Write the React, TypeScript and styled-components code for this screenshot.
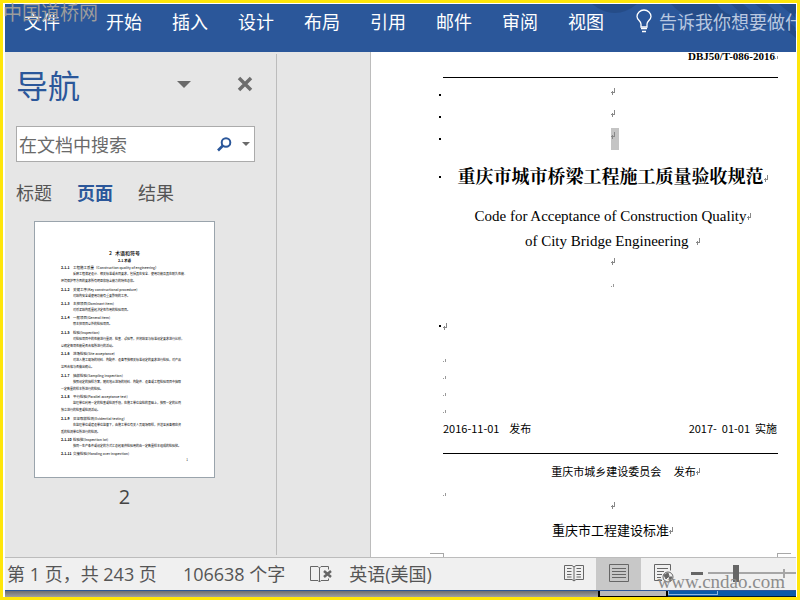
import React from "react";
import styled, { createGlobalStyle } from "styled-components";

const UI = `"Open Sans", "Noto Sans CJK SC", sans-serif`;
const SERIF = `"Liberation Serif", "Noto Serif CJK SC", "Noto Sans CJK SC", serif`;
const HEI = `"Noto Sans CJK SC", sans-serif`;

const Global = createGlobalStyle`
  *, *::before, *::after { box-sizing: border-box; }
  html, body { margin: 0; padding: 0; }
  button, input { font: inherit; color: inherit; border: 0; background: none; padding: 0; margin: 0; }
  p, h1, h2, h3, ul { margin: 0; padding: 0; font-weight: inherit; }
`;

const Frame = styled.div`
  position: relative;
  display: flex;
  flex-direction: column;
  height: 100vh;
  border: 3px solid #ffe60a;
  padding: 1px 1px 0 2px;
  background: #fff;
  font-family: ${UI};
  font-size: 18px;
  line-height: 24px;
  color: #444;
  overflow: hidden;
`;

/* Ribbon */
const Ribbon = styled.nav`
  position: relative;
  flex: none;
  display: flex;
  align-items: flex-start;
  height: 48px;
  padding: 5px 0 0 19px;
  background: #2b579a;
  color: #fff;
  overflow: hidden;
`;
const RibbonArt = styled.svg`
  position: absolute;
  top: 0;
  right: 0;
  width: 205px;
  height: 48px;
`;
const Tab = styled.button<{ $first?: boolean }>`
  position: relative;
  flex: none;
  margin-right: ${(p) => (p.$first ? 46 : 30)}px;
  font-family: ${HEI};
  line-height: 24px;
`;
const TellMe = styled.button`
  position: relative;
  flex: none;
  display: flex;
  align-items: center;
  gap: 7px;
  margin-left: 2px;
  color: #b9c8e0;
  font-family: ${HEI};
  white-space: nowrap;
`;

/* Body */
const Body = styled.div`
  flex: 1;
  min-height: 0;
  display: flex;
  background: #e6e6e6;
`;
const NavPane = styled.aside`
  flex: none;
  width: 272px;
  margin: 2px 0;
  padding: 8px 21px 0 11px;
  border-right: 1px solid #bcbcbc;
  font-family: ${HEI};
`;
const NavHead = styled.div`
  display: flex;
  align-items: center;
  height: 44px;
`;
const NavTitle = styled.h1`
  flex: 1;
  font-size: 32px;
  font-weight: 400;
  line-height: 44px;
  color: #2b579a;
`;
const IconButton = styled.button`
  display: flex;
  align-items: center;
  flex: none;
`;
const CloseButton = styled(IconButton)`
  margin: 0 2px 0 46px;
`;
const SearchBox = styled.form`
  display: flex;
  align-items: center;
  height: 36px;
  margin-top: 20px;
  padding: 0 4px 0 2px;
  gap: 10px;
  border: 1px solid #ababab;
  background: #fff;
`;
const SearchInput = styled.input`
  flex: 1;
  min-width: 0;
  outline: 0;
  &::placeholder { color: #6a6a6a; opacity: 1; }
`;
const NavTabs = styled.div`
  display: flex;
  gap: 25px;
  margin-top: 17px;
`;
const NavTab = styled.button<{ $active?: boolean }>`
  line-height: 26px;
  font-weight: ${(p) => (p.$active ? 700 : 400)};
  color: ${(p) => (p.$active ? "#2b579a" : "#555")};
`;
const Thumb = styled.figure`
  width: 181px;
  margin: 16px 0 0 18px;
  text-align: center;
`;
const ThumbPage = styled.div`
  height: 257px;
  padding: 27px 26px 0;
  border: 1px solid #9aa4ac;
  background: #fff;
  color: #000;
  font-size: 3px;
  line-height: 7px;
  text-align: left;
  white-space: nowrap;
`;
const ThumbTitle = styled.h2`
  font-size: 5px;
  font-weight: 500;
  line-height: 8px;
  text-align: center;
  white-space: pre;
`;
const ThumbSub = styled.h3`
  font-weight: 700;
  line-height: 7px;
  text-align: center;
`;
const Entry = styled.section<{ $spaced?: boolean }>`
  margin-bottom: ${(p) => (p.$spaced ? 1 : 0)}px;
`;
const Term = styled.h3`
  display: grid;
  grid-template-columns: 12px 1fr;
`;
const TermNo = styled.span`
  font-weight: 700;
`;
const Definition = styled.p`
  text-indent: 12px;
  white-space: pre-line;
`;
const ThumbFoot = styled.p`
  text-align: right;
`;
const ThumbCaption = styled.figcaption`
  margin-top: 6px;
  font-family: ${UI};
  font-size: 20px;
  line-height: 26px;
`;

/* Document */
const Canvas = styled.main`
  flex: 1;
  min-width: 0;
  display: flex;
  padding-left: 93px;
`;
const Sheet = styled.article`
  flex: 1;
  min-width: 0;
  display: flex;
  flex-direction: column;
  padding: 0 18px 0 67px;
  border-left: 1px solid #bcbcbc;
  background: #fff;
  color: #000;
  font-family: ${HEI};
  font-size: 11px;
  overflow: hidden;
`;
const DocHeader = styled.header`
  flex: none;
  height: 26px;
  margin-left: 5px;
  padding-right: 3px;
  border-bottom: 1px solid #000;
  font-family: ${SERIF};
  font-weight: 700;
  line-height: 6px;
  text-align: right;
`;
const Line = styled.div<{ $h: number; $align?: string; $indent?: number }>`
  flex: none;
  display: grid;
  grid-template-columns: 5px 1fr;
  align-items: center;
  height: ${(p) => p.$h}px;
  line-height: ${(p) => Math.min(p.$h, 24)}px;
  text-align: ${(p) => p.$align || "center"};
  padding-left: ${(p) => p.$indent || 0}px;
  white-space: pre;
`;
const Gap = styled.div<{ $h: number }>`
  flex: none;
  height: ${(p) => p.$h}px;
`;
const Bullet = styled.i<{ $on?: boolean }>`
  width: 2px;
  height: 2px;
  margin-left: 1px;
  background: ${(p) => (p.$on ? "#000" : "transparent")};
`;
const Text = styled.p<{ $kind?: "title" | "latin" | "large" }>`
  font-family: ${(p) => (p.$kind === "title" || p.$kind === "latin" ? SERIF : HEI)};
  font-size: ${(p) => ({ title: 18, latin: 15, large: 13 })[p.$kind as string] || 11}px;
  font-weight: ${(p) => (p.$kind === "title" ? 700 : 400)};
`;
const MarkSvg = styled.svg`
  width: 5px;
  height: 8px;
  margin-right: -5px;
`;
const EmptyLine = styled.span<{ $selected?: boolean }>`
  display: inline-flex;
  justify-content: flex-start;
  width: 8px;
  height: 22px;
  margin-right: -8px;
  padding-top: 4px;
  background: ${(p) => (p.$selected ? "#c4c4c4" : "transparent")};
  vertical-align: top;
`;
const DateRow = styled.div`
  flex: none;
  display: flex;
  justify-content: space-between;
  height: 36px;
  margin-left: 5px;
  padding-right: 1px;
  border-bottom: 1px solid #000;
  line-height: 21px;
  white-space: pre;
`;
const Corners = styled.div`
  flex: none;
  display: flex;
  justify-content: space-between;
  height: 4px;
  margin: auto -13px 0 -8px;
`;
const Corner = styled.i<{ $side: "left" | "right" }>`
  width: 14px;
  border-top: 1px solid #a8a8a8;
  border-${(p) => (p.$side === "left" ? "right" : "left")}: 1px solid #a8a8a8;
`;

/* Status bar */
const Status = styled.footer`
  flex: none;
  display: flex;
  align-items: center;
  height: 34px;
  padding-left: 2px;
  border-top: 1px solid #bcbcbc;
  border-bottom: 1px solid #2b579a;
  background: #f0f0f0;
  color: #555;
  white-space: pre;
`;
const StatusItem = styled.button<{ $gap: number }>`
  flex: none;
  display: flex;
  margin-right: ${(p) => p.$gap}px;
`;
const Views = styled.div`
  display: flex;
  align-self: stretch;
  margin-left: auto;
`;
const ViewButton = styled.button<{ $active?: boolean }>`
  display: flex;
  align-items: center;
  justify-content: center;
  width: 45px;
  padding-bottom: 2px;
  background: ${(p) => (p.$active ? "#c8c8c8" : "transparent")};
`;
const ZoomArea = styled.div`
  display: flex;
  align-items: center;
  width: 110px;
  gap: 5px;
  padding: 0 0 2px 5px;
`;
const ZoomOut = styled.button`
  width: 12px;
  height: 3px;
  background: #666;
`;
const Slider = styled.input`
  appearance: none;
  flex: 1;
  min-width: 0;
  height: 17px;
  background:
    linear-gradient(#a6a6a6, #a6a6a6) 75px 50% / 2px 9px no-repeat,
    linear-gradient(#a6a6a6, #a6a6a6) 0 50% / 100% 2px no-repeat;
  &::-webkit-slider-thumb {
    appearance: none;
    width: 6px;
    height: 17px;
    background: #666;
  }
`;
const Strip = styled.div`
  flex: none;
  display: flex;
  height: 6px;
  background: linear-gradient(#6e6e6e, #a0a0a0);
`;
const StripTask = styled.i`
  width: 70px;
  margin-left: auto;
  border: 2px solid #000;
  border-width: 0 2px 1px;
  background: #b9b9b9;
`;
const StripBlue = styled.i`
  display: flex;
  width: 128px;
  background: #0a5aa8;
  border-bottom: 1px solid #00182f;
  &::before {
    content: "";
    width: 50px;
    height: 4px;
    border: 1px solid #8db6e0;
    border-top: 0;
  }
`;

/* Overlaid marks */
const Stamp = styled.span<{ $corner: "top" | "bottom" }>`
  position: absolute;
  pointer-events: none;
  white-space: nowrap;
  color: ${(p) => (p.$corner === "top" ? "#9c9c9c" : "#8c8c8c")};
  font-family: ${(p) => (p.$corner === "top" ? HEI : SERIF)};
  font-size: 19px;
  line-height: 24px;
  ${(p) => (p.$corner === "top" ? "top: -3px; left: 0;" : "bottom: 3px; right: 12px;")}
`;

const Mark = ({ small }: { small?: boolean }) => (
  <MarkSvg viewBox="0 0 5 8" shapeRendering="crispEdges" aria-hidden="true">
    {small ? (
      <path d="M2 4h1v3H2zM0 6h1v1H0z" fill="#999" />
    ) : (
      <path d="M3 0h1v5H3zM0 4h3v1H0zM1 3h1v4H1z" fill="#888" />
    )}
  </MarkSvg>
);

const TABS = ["文件", "开始", "插入", "设计", "布局", "引用", "邮件", "审阅", "视图"];

const ENTRIES: [string, string, string, boolean?][] = [
  ["2.1.1", "工程施工质量（Construction quality of engineering）", "反映工程满足设计、相关标准或合同要求，包括其在安全、使用功能及其在耐久性能、\n环境保护等方面的要求所有明显和隐含能力的特性总和。", true],
  ["2.1.2", "关键工序(Key constructional procedure)", "对结构安全或使用功能有重要影响的工序。"],
  ["2.1.3", "主控项目(Dominant item)", "对桥梁结构质量起决定性作用的检验项目。"],
  ["2.1.4", "一般项目(General item)", "除主控项目以外的检验项目。", true],
  ["2.1.5", "检验(Inspection)", "对检验项目中的性能进行量测、检查、试验等，并将结果与标准规定要求进行比较，\n以确定每项性能是否合格所进行的活动。"],
  ["2.1.6", "进场检验(Site acceptance)", "对进入施工现场的材料、构配件、设备等按相关标准规定的要求进行检验，对产品\n达到合格与否做出确认。", true],
  ["2.1.7", "抽样检验(Sampling inspection)", "按照规定的抽样方案，随机地从进场的材料、构配件、设备或工程检验项目中抽取\n一定数量的样本所进行的检验。"],
  ["2.1.8", "平行检验(Parallel acceptance test)", "监理单位利用一定的检查或检测手段，在施工单位自检的基础上，按照一定的比例\n独立进行的检查或检测活动。", true],
  ["2.1.9", "见证取样检测(Evidential testing)", "在监理单位或建设单位监督下，由施工单位有关人员现场取样，并送至具备相应资\n质的检测单位所进行的检测。"],
  ["2.1.10", "检验批(Inspection lot)", "按同一生产条件或规定的方式汇总起来供检验用的由一定数量样本组成的检验批。"],
  ["2.1.11", "交接检验(Handing over inspection)", ""],
];

const Caret = ({ w, h }: { w: number; h: number }) => (
  <svg width={w} height={h} viewBox={`0 0 ${w} ${h}`} aria-hidden="true">
    <path d={`M0 0H${w}L${w / 2} ${h}Z`} fill="#6a6a6a" />
  </svg>
);

export default function App() {
  return (
    <>
      <Global />
      <Frame lang="zh-CN">
        <Ribbon>
          <RibbonArt viewBox="0 0 205 48" preserveAspectRatio="xMaxYMin slice" aria-hidden="true">
            <g fill="#254c88">
              <path d="M1 0H46Q24 18 1 0z" />
              <path d="M80 0H126Q132 10 148 14L140 22Q98 20 80 0z" />
              <path d="M140 0H152L178 22H164zM164 0H176L205 24V34zM188 0H205V14z" />
            </g>
          </RibbonArt>
          {TABS.map((t, i) => (
            <Tab key={t} $first={i === 0} type="button">{t}</Tab>
          ))}
          <TellMe type="button">
            <svg width="16" height="24" viewBox="0 0 16 24" fill="none" stroke="#fff" aria-hidden="true">
              <path d="M5 18v-3C5 12 1 11 1 7.500a7 6.500 0 0 1 14 0C15 11 11 12 11 15v3z" strokeWidth="1.300" />
              <path d="M5 19.500h6M6 22.500h4" strokeWidth="1.500" />
            </svg>
            告诉我你想要做什么
          </TellMe>
        </Ribbon>

        <Body>
          <NavPane aria-label="导航">
            <NavHead>
              <NavTitle>导航</NavTitle>
              <IconButton type="button" aria-label="选项"><Caret w={14} h={7} /></IconButton>
              <CloseButton type="button" aria-label="关闭">
                <svg width="16" height="16" viewBox="0 0 16 16" stroke="#6e6e6e" strokeWidth="3.500" aria-hidden="true">
                  <path d="M2 2l12 12M14 2L2 14" />
                </svg>
              </CloseButton>
            </NavHead>
            <SearchBox onSubmit={(e) => e.preventDefault()}>
              <SearchInput type="text" aria-label="在文档中搜索" placeholder="在文档中搜索" />
              <IconButton type="submit" aria-label="搜索">
                <svg width="15" height="15" viewBox="0 0 15 15" fill="none" stroke="#2b579a" aria-hidden="true">
                  <circle cx="9" cy="5.500" r="4.300" strokeWidth="2" />
                  <path d="M6 8.500L1 13.500" strokeWidth="2.600" />
                </svg>
              </IconButton>
              <IconButton type="button" aria-label="搜索选项"><Caret w={8} h={4} /></IconButton>
            </SearchBox>
            <NavTabs>
              <NavTab type="button">标题</NavTab>
              <NavTab type="button" $active>页面</NavTab>
              <NavTab type="button">结果</NavTab>
            </NavTabs>
            <Thumb>
              <ThumbPage>
                <ThumbTitle>2   术语和符号</ThumbTitle>
                <ThumbSub>2.1 术语</ThumbSub>
                {ENTRIES.map(([no, term, def, spaced]) => (
                  <Entry key={no} $spaced={spaced}>
                    <Term><TermNo>{no}</TermNo><span>{term}</span></Term>
                    {def && <Definition>{def}</Definition>}
                  </Entry>
                ))}
                <ThumbFoot>1</ThumbFoot>
              </ThumbPage>
              <ThumbCaption>2</ThumbCaption>
            </Thumb>
          </NavPane>

          <Canvas>
            <Sheet>
              <DocHeader>DBJ50/T-086-2016<Mark small /></DocHeader>
              <Gap $h={6} />
              <Line $h={22}><Bullet $on /><Text><EmptyLine><Mark /></EmptyLine></Text></Line>
              <Line $h={22}><Bullet $on /><Text><EmptyLine><Mark /></EmptyLine></Text></Line>
              <Line $h={22}><Bullet $on /><Text><EmptyLine $selected><Mark /></EmptyLine></Text></Line>
              <Line $h={54}><Bullet $on /><Text $kind="title">重庆市城市桥梁工程施工质量验收规范<Mark /></Text></Line>
              <Line $h={24}><Bullet /><Text $kind="latin">Code for Acceptance of Construction Quality<Mark /></Text></Line>
              <Line $h={25}><Bullet /><Text $kind="latin">of City Bridge Engineering  <Mark /></Text></Line>
              <Line $h={16}><Bullet /><Text><Mark /></Text></Line>
              <Line $h={28}><Bullet /><Text><Mark small /></Text></Line>
              <Gap $h={19} />
              <Line $h={20} $align="left"><Bullet $on /><Text><Mark /></Text></Line>
              <Gap $h={14} />
              {[0, 1, 2, 3].map((n) => (
                <Line key={n} $h={17} $align="left"><Bullet /><Text><Mark small /></Text></Line>
              ))}
              <DateRow>
                <time dateTime="2016-11-01">2016-11-01    发布</time>
                <time dateTime="2017-01-01">2017-  01-01  实施</time>
              </DateRow>
              <Line $h={34} $indent={26}><Bullet /><Text>重庆市城乡建设委员会     发布<Mark /></Text></Line>
              <Line $h={8} $align="left"><Bullet /><Text><Mark small /></Text></Line>
              <Line $h={18}><Bullet /><Text><Mark /></Text></Line>
              <Line $h={32}><Bullet /><Text $kind="large">重庆市工程建设标准<Mark /></Text></Line>
              <Corners><Corner $side="left" /><Corner $side="right" /></Corners>
            </Sheet>
          </Canvas>
        </Body>

        <Status>
          <StatusItem type="button" $gap={26}>第 1 页，共 243 页</StatusItem>
          <StatusItem type="button" $gap={25}>106638 个字</StatusItem>
          <StatusItem type="button" $gap={17} aria-label="校对">
            <svg width="22" height="18" viewBox="0 0 22 18" fill="none" stroke="#666" aria-hidden="true">
              <path d="M9.500 17V3L8 1.500H.5v14H8L9.500 17l1.500-1.500h7.500v-2M9.500 3L11 1.500h7.500v3" />
              <path d="M14 6l7 6M21 6l-7 6" strokeWidth="2.500" />
            </svg>
          </StatusItem>
          <StatusItem type="button" $gap={0}>英语(美国)</StatusItem>
          <Views>
            <ViewButton type="button" aria-label="阅读视图">
              <svg width="20" height="18" viewBox="0 0 20 18" fill="none" stroke="#666" aria-hidden="true">
                <path d="M.5 1.500H8L10 3l2-1.500h7.500v14H12L10 17l-2-1.500H.5zM10 3v14" />
                <path d="M3 4.500h4.500M3 7.500h4.500M3 10.500h4.500M3 13h4.500M12.500 4.500H17M12.500 7.500H17M12.500 10.500H17M12.500 13H17" />
              </svg>
            </ViewButton>
            <ViewButton type="button" $active aria-label="页面视图">
              <svg width="20" height="18" viewBox="0 0 20 18" fill="none" stroke="#666" aria-hidden="true">
                <path d="M.5 .5h19v17H.5zM3 4.500h14M3 7.500h14M3 10.500h14M3 13.500h14" />
              </svg>
            </ViewButton>
            <ViewButton type="button" aria-label="Web 版式视图">
              <svg width="20" height="19" viewBox="0 0 20 19" fill="none" stroke="#666" aria-hidden="true">
                <path d="M8 16.500H.5V.5h16v6M3 4.500h11M3 7.500h7M3 10.500h5M3 13.500h4" />
                <circle cx="14" cy="13" r="5" />
                <path d="M10 11l4-2 1 3-3 3zM15 13l3 0-2 4z" fill="#666" />
              </svg>
            </ViewButton>
          </Views>
          <ZoomArea>
            <ZoomOut type="button" aria-label="缩小" />
            <Slider type="range" min={0} max={100} defaultValue={30} aria-label="显示比例" />
          </ZoomArea>
        </Status>
        <Strip><StripTask /><StripBlue /></Strip>

        <Stamp $corner="top">中国道桥网</Stamp>
        <Stamp $corner="bottom">www.cndao.com</Stamp>
      </Frame>
    </>
  );
}
